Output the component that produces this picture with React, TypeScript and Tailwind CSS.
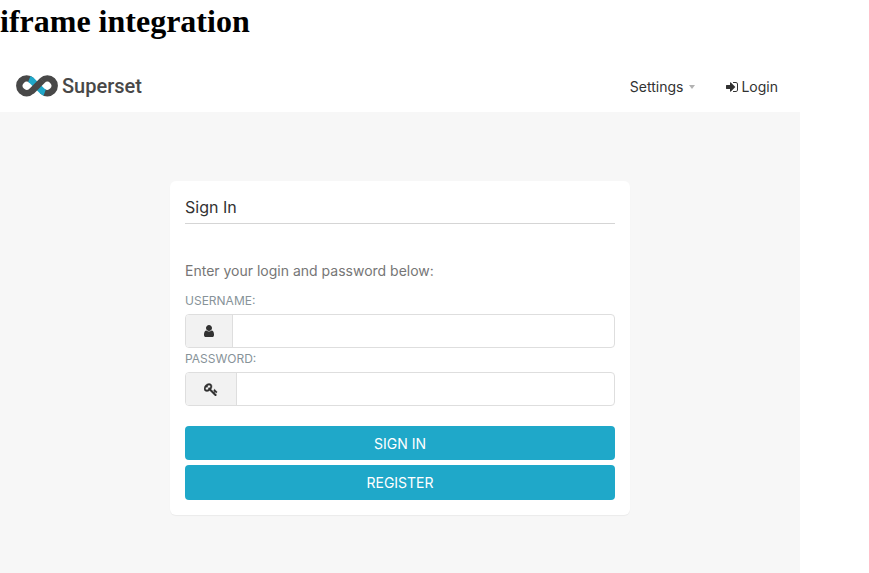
import { useState } from "react";
import type { FormEvent, ReactNode } from "react";

interface FieldProps {
  id: string;
  label: string;
  type: string;
  value: string;
  onChange: (value: string) => void;
  icon: ReactNode;
}

function SupersetLogo() {
  return (
    <svg className="h-[22px] w-[42px]" viewBox="0 0 42 22" fill="none" aria-hidden="true">
      <g strokeWidth="6.6">
        <path
          d="M15.8 5.6A7.3 7.3 0 1 0 15.8 16M26.2 5.6A7.3 7.3 0 1 1 26.2 16"
          stroke="#484848"
        />
        <path
          d="M13.3 4A7.3 7.3 0 0 1 15.8 5.6L26.2 16A7.3 7.3 0 0 0 28.7 17.6"
          stroke="#20a7c9"
        />
        <path d="M15.5 16.3L26.5 5.3" stroke="#484848" />
      </g>
    </svg>
  );
}

function LoginIcon() {
  return (
    <svg className="size-[14px]" viewBox="0 0 1792 1792" fill="currentColor" aria-hidden="true">
      <path d="M1312 896q0 26-19 45l-544 544q-19 19-45 19t-45-19-19-45v-288h-448q-26 0-45-19t-19-45v-384q0-26 19-45t45-19h448v-288q0-26 19-45t45-19 45 19l544 544q19 19 19 45z" />
      <path d="M1664 544v704q0 119-84.500 203.500t-203.500 84.500h-320q-32 0-32-32v-64q0-32 32-32h320q66 0 113-47t47-113v-704q0-66-47-113t-113-47h-320q-32 0-32-32v-64q0-32 32-32h320q119 0 203.500 84.500t84.500 203.500z" />
    </svg>
  );
}

function UserIcon() {
  return (
    <svg className="h-[14px] w-[10px]" viewBox="256 0 1280 1792" fill="currentColor" aria-hidden="true">
      <path d="M1536 1399q0 109-62.500 187t-150.500 78h-854q-88 0-150.500-78t-62.500-187q0-85 8.500-160.500t31.500-152 58.500-131 94-89 134.500-34.500q131 128 313 128t313-128q76 0 134.500 34.500t94 89 58.500 131 31.500 152 8.500 160.500zm-256-887q0 159-112.500 271.500t-271.500 112.500-271.500-112.500-112.500-271.500 112.500-271.500 271.500-112.500 271.500 112.500 112.500 271.500z" />
    </svg>
  );
}

function KeyIcon() {
  return (
    <svg
      className="size-[14px]"
      viewBox="0 -64 1792 1792"
      fill="currentColor"
      stroke="currentColor"
      strokeWidth="50"
      aria-hidden="true"
    >
      <path d="M832 512q0-80-56-136t-136-56-136 56-56 136q0 42 19 83-41-19-83-19-80 0-136 56t-56 136 56 136 136 56 136-56 56-136q0-42-19-83 41 19 83 19 80 0 136-56t56-136zm851 704q0 17-49 66t-66 49q-9 0-28.500-16t-36.500-33-38.500-40-24.500-26l-96 96 220 220q28 28 28 68 0 42-39 81t-81 39q-40 0-68-28l-671-671q-176 131-365 131-163 0-265.500-102.500t-102.500-265.500q0-160 95-313t248-248 313-95q163 0 265.500 102.500t102.500 265.500q0 189-131 365l355 355 96-96q-3-3-26-24.500t-40-38.500-33-36.500-16-28.500q0-17 49-66t66-49q13 0 23 10 6 6 46 44.500t82 79.500 86.500 86 73 78 28.500 41z" />
    </svg>
  );
}

function Field({ id, label, type, value, onChange, icon }: FieldProps) {
  return (
    <div>
      <label htmlFor={id} className="block pt-[3px] pb-[5px] text-xs text-[#879399]">
        {label}
      </label>
      <div className="flex h-[34px] overflow-hidden rounded border border-[#dedede] bg-white">
        <span className="flex items-center border-r border-[#dedede] bg-[#f2f2f2] px-[18px] text-[#323232]">
          {icon}
        </span>
        <input
          id={id}
          type={type}
          value={value}
          onChange={(e) => onChange(e.target.value)}
          className="min-w-0 flex-1 px-3 text-sm text-[#323232] outline-none"
        />
      </div>
    </div>
  );
}

function App() {
  const [username, setUsername] = useState("");
  const [password, setPassword] = useState("");

  const handleSubmit = (e: FormEvent) => {
    e.preventDefault();
  };

  return (
    <div className="flex min-h-screen flex-col bg-white">
      <h1 className="pt-0.5 font-['Liberation_Serif',serif] text-[32px] leading-[38px] font-bold text-black">
        iframe integration
      </h1>

      <div className="mt-5 flex w-full max-w-[800px] flex-1 flex-col bg-[#f7f7f7] font-[Inter,sans-serif]">
        {/* Navbar */}
        <header className="flex h-[52px] items-center justify-between bg-white pr-[22px] pl-4">
          <a href="#" className="flex items-center gap-1">
            <SupersetLogo />
            <span className="font-[Roboto,sans-serif] text-xl font-medium text-[#484848]">
              Superset
            </span>
          </a>
          <nav className="flex items-center gap-[30px] pt-0.5 text-sm text-[#323232]">
            <button type="button" className="flex items-center gap-1.5">
              Settings
              <svg className="h-1 w-1.5" viewBox="0 0 6 4" fill="#b2b2b2" aria-hidden="true">
                <path d="M0 0h6L3 4z" />
              </svg>
            </button>
            <a href="#" className="flex items-center gap-0.5">
              <LoginIcon />
              Login
            </a>
          </nav>
        </header>

        <main className="flex justify-center px-4 pt-[69px] pb-14">
          <form
            onSubmit={handleSubmit}
            className="w-full max-w-[460px] rounded-md bg-white px-[15px] pt-3.5 pb-[15px] shadow-[0_1px_1px_rgba(0,0,0,0.05)]"
          >
            <h2 className="border-b border-[#d5d5d5] pb-1 text-base text-[#323232]">Sign In</h2>
            <p className="mt-[37px] mb-[9px] text-sm text-[#767676]">
              Enter your login and password below:
            </p>

            <Field
              id="username"
              label="USERNAME:"
              type="text"
              value={username}
              onChange={setUsername}
              icon={<UserIcon />}
            />
            <Field
              id="password"
              label="PASSWORD:"
              type="password"
              value={password}
              onChange={setPassword}
              icon={<KeyIcon />}
            />

            <div className="mt-5 flex flex-col gap-[5px]">
              <button
                type="submit"
                className="h-[34px] rounded bg-[#1fa8c9] pt-0.5 text-sm text-white"
              >
                SIGN IN
              </button>
              <a
                href="#"
                className="flex h-[35px] items-center justify-center rounded bg-[#1fa8c9] text-sm text-white"
              >
                REGISTER
              </a>
            </div>
          </form>
        </main>
      </div>
    </div>
  );
}

export default App;
